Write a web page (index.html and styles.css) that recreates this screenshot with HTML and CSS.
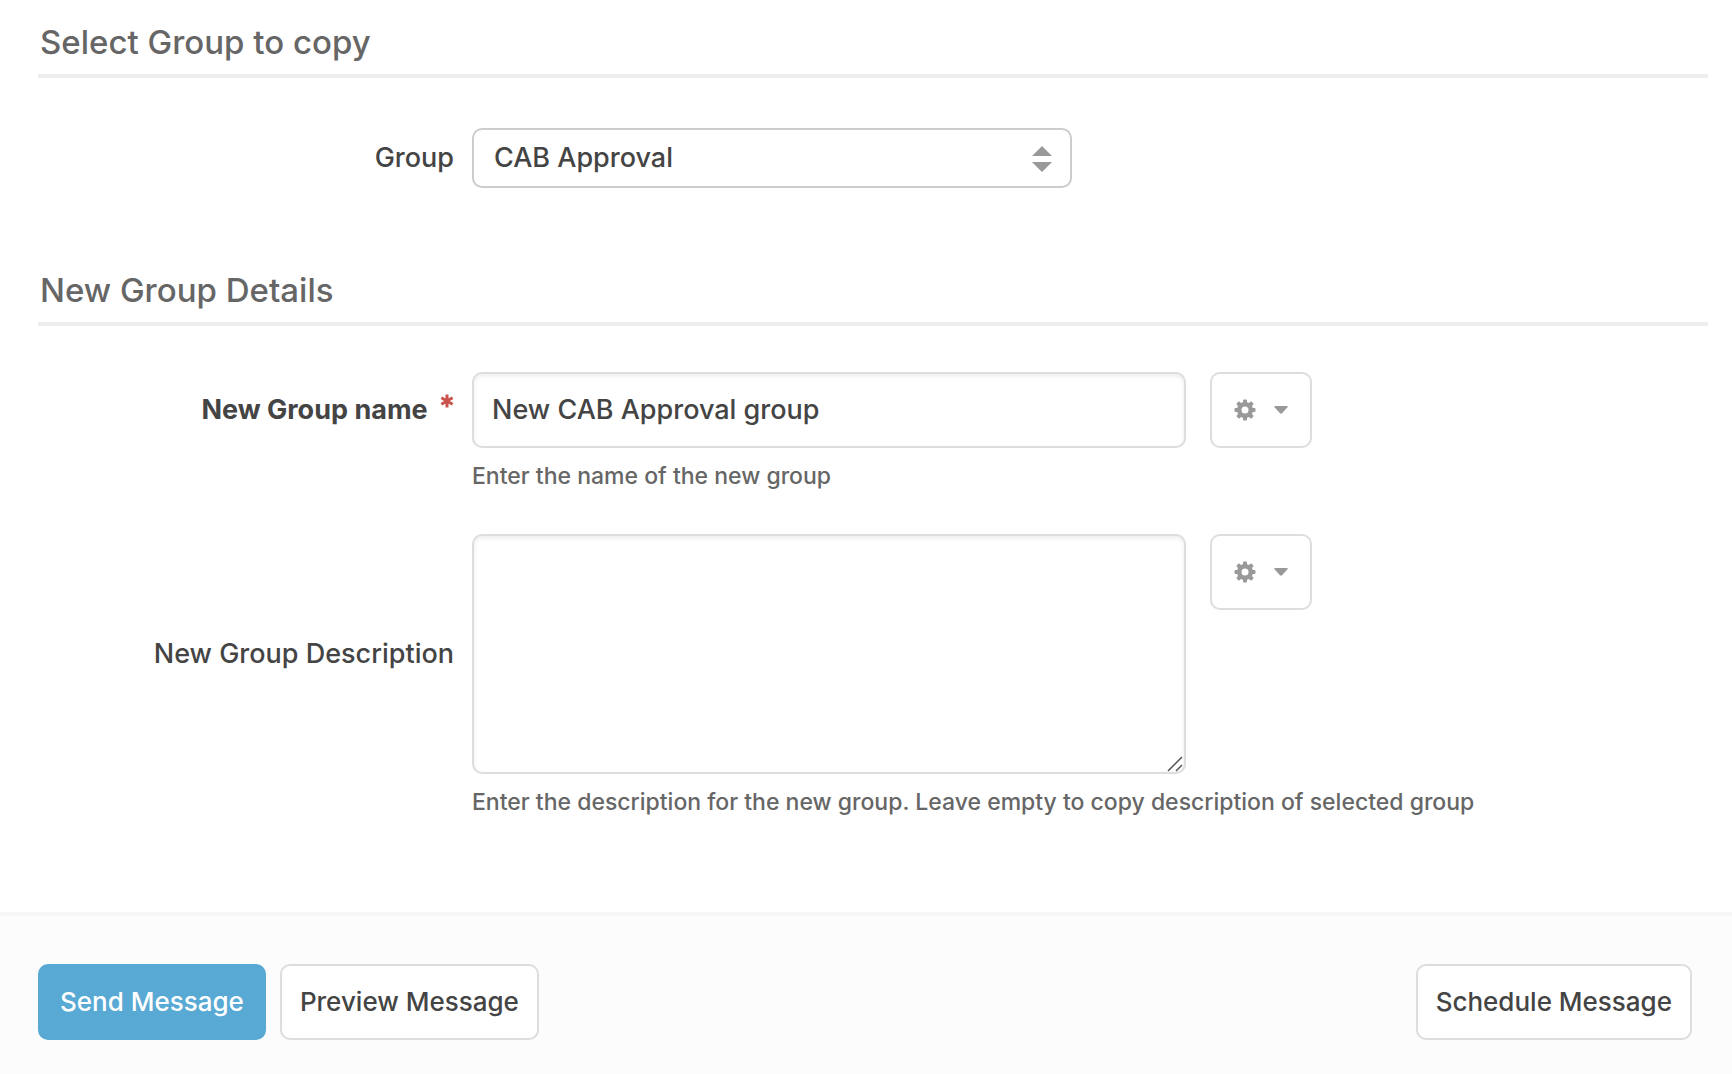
FILE: index.html
```html
<!DOCTYPE html>
<html lang="en">
<head>
<meta charset="utf-8">
<meta name="viewport" content="width=device-width, initial-scale=1">
<title>Copy Group</title>
<link rel="stylesheet" href="styles.css">
</head>
<body>
<svg class="sprite" aria-hidden="true">
  <symbol id="gear" viewBox="-11 -11 22 22">
    <g fill="currentColor">
      <rect x="-2" y="-10.500" width="4" height="21" rx="1"/>
      <rect x="-2" y="-10.500" width="4" height="21" rx="1" transform="rotate(45)"/>
      <rect x="-2" y="-10.500" width="4" height="21" rx="1" transform="rotate(90)"/>
      <rect x="-2" y="-10.500" width="4" height="21" rx="1" transform="rotate(135)"/>
      <circle r="8"/>
    </g>
    <circle r="3.500" fill="#fff"/>
  </symbol>
  <symbol id="caret" viewBox="0 0 14 8">
    <path d="M1 0h12q1.200.3.500 1.300L8 7.300q-1 .8-2 0L.5 1.300Q-.2.3 1 0z" fill="currentColor"/>
  </symbol>
</svg>
<form class="page">
  <main class="content">
    <section class="section">
      <h2 class="section-title">Select Group to copy</h2>
      <div class="field">
        <label class="label" for="group">Group</label>
        <div class="select-wrap">
          <select class="select" id="group"><option>CAB Approval</option></select>
          <svg class="select-arrows" viewBox="0 0 20 26" aria-hidden="true"><path d="M10 0l10 10H0zM0 16h20L10 26z" fill="#999"/></svg>
        </div>
      </div>
    </section>
    <section class="section">
      <h2 class="section-title">New Group Details</h2>
      <div class="field">
        <label class="label label-required" for="name">New Group name <span class="required"><svg viewBox="-7 -7 14 14" aria-label="required"><path d="M0-6.500v13M-5.600-3.300l11.200 6.600M-5.600 3.300l11.200-6.600" stroke="#c9524c" stroke-width="3"/></svg></span></label>
        <input class="input" id="name" type="text" value="New CAB Approval group">
        <button class="button options" type="button" aria-label="Name options"><svg class="gear"><use href="#gear"/></svg><svg class="caret"><use href="#caret"/></svg></button>
        <p class="help">Enter the name of the new group</p>
      </div>
      <div class="field">
        <label class="label" for="description">New Group Description</label>
        <div class="textarea-wrap">
          <textarea class="input textarea" id="description"></textarea>
          <svg class="grip" viewBox="0 0 16 16" aria-hidden="true"><path d="M1 15L15 1M9 15l6-6" stroke="#555" stroke-width="1.500"/></svg>
        </div>
        <button class="button options" type="button" aria-label="Description options"><svg class="gear"><use href="#gear"/></svg><svg class="caret"><use href="#caret"/></svg></button>
        <p class="help">Enter the description for the new group. Leave empty to copy description of selected group</p>
      </div>
    </section>
  </main>
  <footer class="footer">
    <button class="button primary" type="submit">Send Message</button>
    <button class="button" type="button">Preview Message</button>
    <button class="button schedule" type="button">Schedule Message</button>
  </footer>
</form>
</body>
</html>
```
FILE: styles.css
```css
* {
  box-sizing: border-box;
}

body {
  margin: 0;
  background: #fff;
  color: #444;
  font: 500 27px/32px Inter, "Liberation Sans", sans-serif;
}

.sprite {
  position: absolute;
  width: 0;
  height: 0;
}

.page {
  display: flex;
  flex-direction: column;
  min-height: 100vh;
}

.content {
  padding: 22px 24px 94px 38px;
}

.section + .section {
  margin-top: 82px;
}

.section-title {
  margin: 0 0 50px;
  padding: 0 2px 12px;
  border-bottom: 4px solid #eee;
  color: #666;
  font-size: 33px;
  font-weight: 500;
  line-height: 40px;
}

.section + .section .section-title {
  margin-bottom: 46px;
}

.field {
  display: grid;
  grid-template-columns: 416px minmax(0, 714px) 102px;
  column-gap: 18px;
  align-items: start;
}

.field + .field {
  margin-top: 42px;
}

.label {
  align-self: center;
  text-align: right;
}

.label-required {
  font-weight: 700;
}

.required {
  display: inline-block;
  width: 14px;
  height: 24px;
  margin-left: 6px;
  vertical-align: top;
}

.required svg {
  display: block;
  width: 14px;
  height: 14px;
}

.select-wrap {
  position: relative;
  max-width: 600px;
}

.select {
  display: block;
  width: 100%;
  height: 60px;
  padding: 0 20px;
  appearance: none;
  border: 2px solid #ccc;
  border-radius: 10px;
  background: #fff;
  color: inherit;
  font: inherit;
}

.select-arrows {
  position: absolute;
  top: 18px;
  right: 20px;
  width: 20px;
  height: 26px;
  pointer-events: none;
}

.input {
  display: block;
  width: 100%;
  height: 76px;
  padding: 0 18px 2px;
  border: 2px solid #ddd;
  border-radius: 10px;
  background: #fff;
  box-shadow: inset 0 2px 4px rgba(0, 0, 0, 0.08);
  color: inherit;
  font: inherit;
}

.textarea-wrap {
  position: relative;
}

.textarea {
  height: 240px;
  padding: 20px;
  resize: none;
}

.grip {
  position: absolute;
  right: 3px;
  bottom: 2px;
  width: 16px;
  height: 16px;
  pointer-events: none;
}

.help {
  grid-column: 2 / -1;
  margin: 12px 0 0;
  color: #666;
  font-size: 23px;
  line-height: 32px;
  white-space: nowrap;
}

.button {
  height: 76px;
  padding: 0 18px;
  border: 2px solid #ddd;
  border-radius: 10px;
  background: #fff;
  color: #444;
  font: inherit;
  font-size: 26px;
}

.options {
  display: flex;
  align-items: center;
  gap: 18px;
  width: 102px;
  margin-left: 6px;
  padding: 0 22px;
  color: #999;
}

.gear {
  width: 22px;
  height: 22px;
}

.caret {
  width: 14px;
  height: 8px;
}

.footer {
  display: flex;
  flex: 1;
  align-items: flex-start;
  gap: 14px;
  padding: 48px 40px 34px 38px;
  border-top: 4px solid #f6f6f6;
  background: #fcfcfc;
}

.primary {
  padding: 0 20px;
  border-color: #58a9d3;
  background: #58a9d3;
  color: #fff;
}

.schedule {
  margin-left: auto;
}
```
